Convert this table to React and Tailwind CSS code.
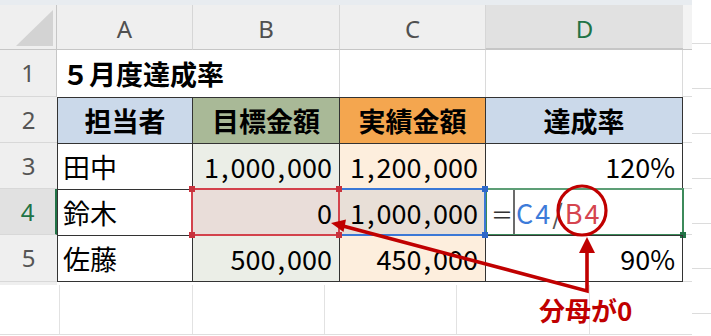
import React from "react";

const F = "font-['Noto_Sans_CJK_JP','Noto_Sans',sans-serif]";
const HF = "font-['Noto_Sans','Noto_Sans_CJK_JP',sans-serif]";

function ColHead({ label, sel, left }) {
  return (
    <div
      className={`flex items-center justify-center pt-[4px] border-b border-b-[#c6c6c6] ${left ? "border-l border-l-[#d6d6d6]" : ""} ${
        sel ? "bg-[#e1e1e1] border-b-2 border-b-[#217346] text-[#217346]" : "bg-[#efefef] text-[#505050]"
      } ${HF} text-[24px] leading-none`}
    >
      {label}
    </div>
  );
}

function RowHead({ n, sel, first }) {
  return (
    <div
      className={`flex items-center justify-center ${HF} text-[24px] leading-none border-b border-b-[#d8d8d8] ${
        sel ? "bg-[#e1e1e1] text-[#217346] border-r-2 border-r-[#217346]" : "bg-[#efefef] text-[#555555]"
      } ${first ? "border-r border-r-[#c6c6c6]" : ""}`}
    >
      {n}
    </div>
  );
}

function Extra({ head }) {
  return <div className={`${head ? "bg-[#f3f3f3] border-b border-b-[#c6c6c6]" : "bg-white border-b border-b-[#dcdcdc]"}`} />;
}

function Cell({ children, cls = "", align = "left", last, right, bold, center }) {
  return (
    <div
      className={`relative flex items-center border-l border-t border-[#333333] ${last ? "border-b" : ""} ${
        right ? "border-r" : ""
      } ${center ? "justify-center" : align === "right" ? "justify-end pr-[7px]" : "justify-start pl-[5px]"} ${F} text-[27px] leading-none text-black ${
        bold ? "font-bold" : ""
      } ${cls}`}
    >
      {children}
    </div>
  );
}

function Num({ v }) {
  const parts = v.split(",");
  return (
    <span className="whitespace-nowrap">
      {parts.map((p, i) => (
        <React.Fragment key={i}>
          {i > 0 && <span className="mx-[2px]">,</span>}
          {p}
        </React.Fragment>
      ))}
    </span>
  );
}

export default function App() {
  return (
    <div className="relative w-[711px] h-[336px] overflow-hidden bg-white flex">
      <div className="w-[692px] flex flex-col">
        <div className="h-[5px] bg-[#e8ecf0]" />
        <div className="grid grid-cols-[57px_135px_147px_146px_198px_9px] grid-rows-[45px_47px_46px_46px_46px_47px]">
          {/* header row */}
          <div className="bg-[#efefef] border-b border-r border-[#c6c6c6]">
            <svg width="56" height="44" viewBox="0 0 56 44" className="block">
              <polygon points="53,5 53,41 16,41" fill="#d3d3d3" />
            </svg>
          </div>
          <ColHead label="A" />
          <ColHead label="B" left />
          <ColHead label="C" left />
          <ColHead label="D" left sel />
          <Extra head />

          {/* row 1 */}
          <RowHead n="1" first />
          <div className={`col-span-2 flex items-center pl-[5px] ${F} text-[27px] leading-none font-bold text-black whitespace-nowrap`}>
            ５月度達成率
          </div>
          <div className="border-l border-l-[#dadada]" />
          <div className="border-l border-r border-[#dadada]" />
          <Extra />

          {/* row 2 */}
          <RowHead n="2" />
          <Cell bold center cls="bg-[#cbd9ea]">担当者</Cell>
          <Cell bold center cls="bg-[#a9b997]">目標金額</Cell>
          <Cell bold center cls="bg-[#f4a64f]">実績金額</Cell>
          <Cell bold center right cls="bg-[#cbd9ea]">達成率</Cell>
          <Extra />

          {/* row 3 */}
          <RowHead n="3" />
          <Cell>田中</Cell>
          <Cell align="right" cls="bg-[#ebeee7]"><Num v="1,000,000" /></Cell>
          <Cell align="right" cls="bg-[#fdeedd]"><Num v="1,200,000" /></Cell>
          <Cell align="right" right>120%</Cell>
          <Extra />

          {/* row 4 */}
          <RowHead n="4" sel />
          <Cell>鈴木</Cell>
          <Cell align="right" cls="bg-[#e9ddd9] z-20">
            0
            <div className="absolute -left-[2px] -top-[2px] w-[149px] h-[48px] border-2 border-[#d3424c]" />
            <div className="absolute -left-[4px] -top-[4px] w-[6px] h-[6px] bg-[#c8323d]" />
            <div className="absolute left-[143px] -top-[4px] w-[6px] h-[6px] bg-[#c8323d]" />
            <div className="absolute -left-[4px] top-[42px] w-[6px] h-[6px] bg-[#c8323d]" />
            <div className="absolute left-[143px] top-[42px] w-[6px] h-[6px] bg-[#c8323d]" />
          </Cell>
          <Cell align="right" cls="bg-[#e8dfd7] z-10">
            <Num v="1,000,000" />
            <div className="absolute -left-[2px] -top-[2px] w-[148px] h-[48px] border-2 border-[#3b78d6]" />
            <div className="absolute left-[142px] -top-[4px] w-[6px] h-[6px] bg-[#2f68c8]" />
            <div className="absolute left-[142px] top-[42px] w-[6px] h-[6px] bg-[#2f68c8]" />
          </Cell>
          <Cell right cls="pl-[3px]">
            <span className="text-[#333333] text-[22px]">＝</span>
            <span className="inline-block w-[2px] h-[46px] bg-[#6b6b6b] mr-[1px]" />
            <span className="tracking-[2px]">
              <span className="text-[#3d7bd9]">C4</span>
              <span className="text-[#555555]">/</span>
              <span className="text-[#d5454f]">B4</span>
            </span>
            <div className="absolute -left-[1px] -top-[2px] w-[199px] h-[48px] border-2 border-[#3c8a5a] border-t-[#5d9e76]" />
            <div className="absolute left-[194px] top-[42px] w-[6px] h-[6px] bg-[#217346]" />
          </Cell>
          <Extra />

          {/* row 5 */}
          <RowHead n="5" />
          <Cell last>佐藤</Cell>
          <Cell last align="right" cls="bg-[#ebeee7]"><Num v="500,000" /></Cell>
          <Cell last align="right" cls="bg-[#fdeedd]"><Num v="450,000" /></Cell>
          <Cell last align="right" right>90%</Cell>
          <Extra />
        </div>

        {/* empty area below */}
        <div className="flex flex-col">
          <div className="h-[3px] flex">
            <div className="w-[57px] bg-[#efefef]" />
          </div>
          <div className="h-[50px] flex border-b border-[#dedede]">
            <div className="w-[59px]" />
            <div className="w-[133px] border-l border-[#e2e2e2]" />
            <div className="w-[132px] border-l border-[#e2e2e2]" />
            <div className="w-[132px] border-l border-[#e2e2e2]" />
            <div className="w-[133px] border-l border-[#e2e2e2]" />
            <div className="w-[103px] border-l border-[#e2e2e2]" />
          </div>
        </div>
      </div>
      <div className="w-[19px] h-full bg-[image:repeating-linear-gradient(to_bottom,transparent_0px,transparent_43px,#dcdcdc_43px,#dcdcdc_44px,transparent_44px,transparent_45px)]" />

      {/* annotation */}
      <svg className="absolute left-0 top-0 z-30 pointer-events-none" width="711" height="336" viewBox="0 0 711 336">
        <ellipse cx="582" cy="210.5" rx="24" ry="24.5" fill="none" stroke="#c00000" strokeWidth="3.2" />
        <polyline points="343,226 587,291 587,250" fill="none" stroke="#c00000" strokeWidth="3.6" strokeLinejoin="miter" />
        <polygon points="331,223 346,219.5 343.5,232" fill="#c00000" />
        <polygon points="587,237 579,253 595,253" fill="#c00000" />
      </svg>
      <div className={`absolute left-[539px] top-[297px] z-30 ${F} text-[26px] leading-none font-bold text-[#c00000] whitespace-nowrap`}>
        分母が0
      </div>
    </div>
  );
}
